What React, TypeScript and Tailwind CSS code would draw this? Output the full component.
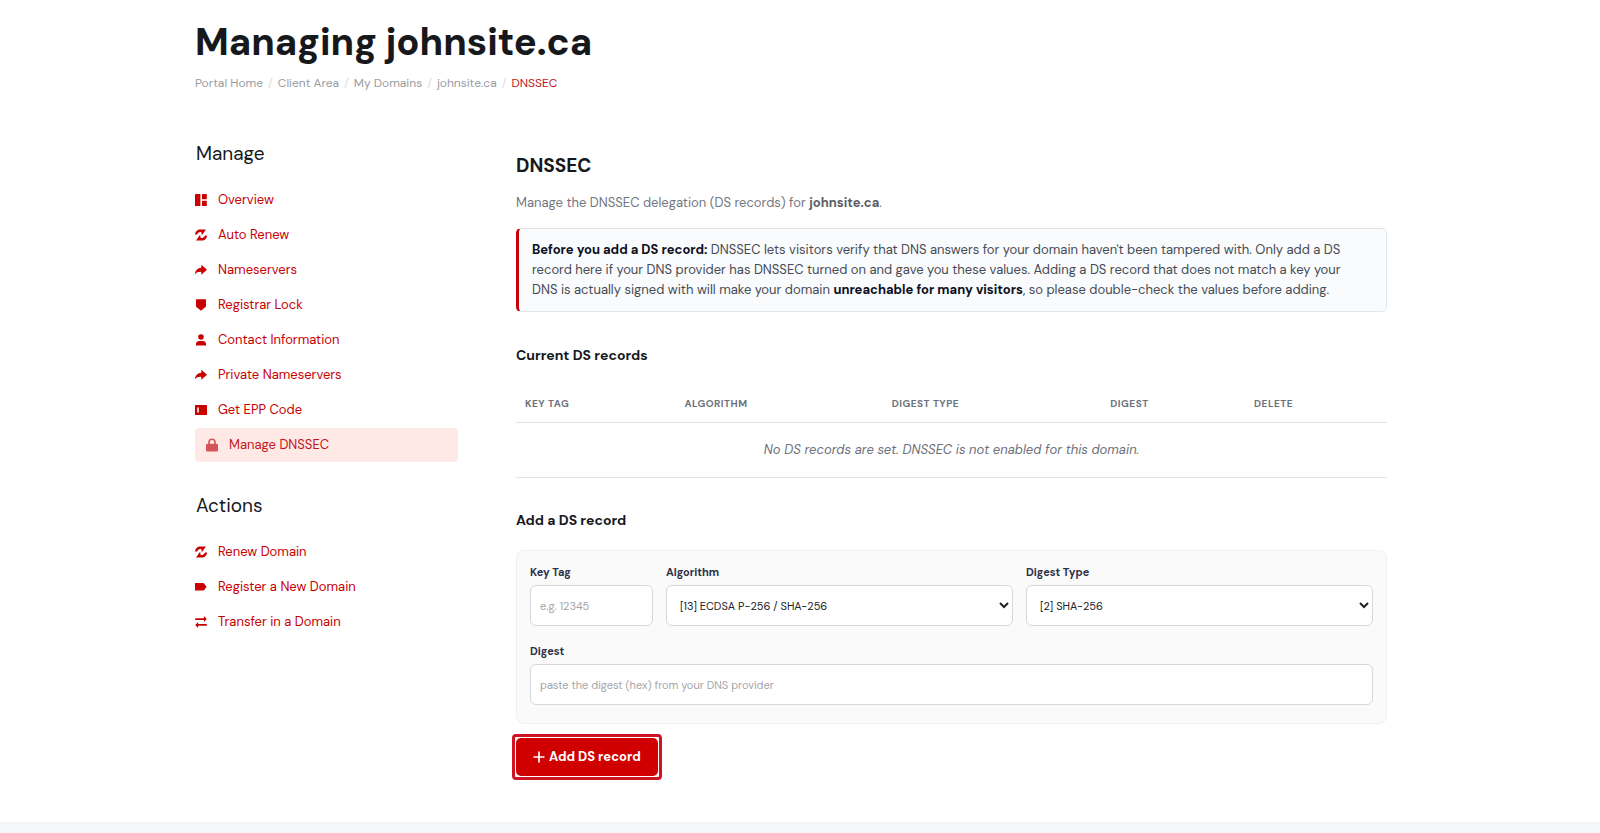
import type { ReactNode } from 'react';

type NavItem = { label: string; icon: ReactNode; active?: boolean };

const Icon = ({ children }: { children: ReactNode }) => (
  <svg viewBox="0 0 12 12" fill="currentColor" className="h-3 w-3 shrink-0" aria-hidden="true">
    {children}
  </svg>
);

const overviewIcon = (
  <Icon>
    <rect x="0" y="0" width="5.4" height="12" rx="0.5" />
    <rect x="7" y="0" width="4.8" height="5.2" rx="0.5" />
    <rect x="7" y="6.8" width="4.8" height="5.2" rx="0.5" />
  </Icon>
);

const renewIcon = (
  <Icon>
    <path d="M0 5.600C.2 2.400 2.500.4 5.300.4H11L6.900 6.200 6.300 3C4.200 2.600 2.600 4 2 5.600Z" />
    <path d="M12 6.400C11.800 9.600 9.500 11.600 6.700 11.600H1L5.100 5.800 5.700 9C7.800 9.400 9.400 8 10 6.400Z" />
  </Icon>
);

const shareIcon = (
  <Icon>
    <path d="M6.300.8 12 5.800 6.300 10.800V7.900C3.600 7.700 1.600 8.500 0 10.300 0 6.400 2.700 4 6.300 3.700Z" />
  </Icon>
);

const shieldIcon = (
  <Icon>
    <path d="M1.500.2h9q.5 0 .5.500v6.500q0 .5-.4.800L6 11.800 1.400 8q-.4-.3-.4-.8V.7q0-.5.5-.5Z" />
  </Icon>
);

const personIcon = (
  <Icon>
    <circle cx="6" cy="3" r="2.800" />
    <path d="M1 11.400V10C1 8.200 2.600 7.100 4.200 7.100h3.600C9.400 7.100 11 8.200 11 10v1.400Z" />
  </Icon>
);

const codeIcon = (
  <Icon>
    <path fillRule="evenodd" d="M.5.9h11q.5 0 .5.500v9.200q0 .5-.5.500H.5q-.5 0-.5-.5V1.400q0-.5.5-.5ZM2.200 3.600v4.800h1.600V3.600Z" />
  </Icon>
);

const tagIcon = (
  <Icon>
    <path d="M.5 2h7.800q.4 0 .7.400L11.600 5.800 9 9.200q-.3.400-.7.400H.5Q0 9.600 0 9.100V2.500Q0 2 .5 2Z" />
  </Icon>
);

const transferIcon = (
  <Icon>
    <path d="M.2 2.200H8.900V0L11.800 3 8.900 6V3.900H.2Z" />
    <path d="M11.800 8.100H3.100V6L.2 9l2.900 3V9.800H11.800Z" />
  </Icon>
);

const lockIcon = (
  <svg viewBox="0 0 12 14" className="h-3.5 w-3 shrink-0 opacity-70" aria-hidden="true">
    <path d="M3 6.500V4.200a3 3 0 0 1 6 0v2.300" fill="none" stroke="currentColor" strokeWidth="1.600" />
    <rect x="0" y="5.800" width="12" height="7.800" rx="1.500" fill="currentColor" />
  </svg>
);

const manageItems: NavItem[] = [
  { label: 'Overview', icon: overviewIcon },
  { label: 'Auto Renew', icon: renewIcon },
  { label: 'Nameservers', icon: shareIcon },
  { label: 'Registrar Lock', icon: shieldIcon },
  { label: 'Contact Information', icon: personIcon },
  { label: 'Private Nameservers', icon: shareIcon },
  { label: 'Get EPP Code', icon: codeIcon },
  { label: 'Manage DNSSEC', icon: lockIcon, active: true },
];

const actionItems: NavItem[] = [
  { label: 'Renew Domain', icon: renewIcon },
  { label: 'Register a New Domain', icon: tagIcon },
  { label: 'Transfer in a Domain', icon: transferIcon },
];

const crumbs = ['Portal Home', 'Client Area', 'My Domains', 'johnsite.ca'];

function NavSection({ title, items }: { title: string; items: NavItem[] }) {
  return (
    <nav aria-label={title}>
      <h2 className="mb-3.5 pl-px text-[19px] leading-[30px] text-[#16181c]">{title}</h2>
      <ul className="flex flex-col gap-px">
        {items.map(item => (
          <li key={item.label}>
            <a
              href="#"
              aria-current={item.active ? 'page' : undefined}
              className={
                item.active
                  ? 'flex h-[34px] items-center gap-[11px] rounded bg-[#ffe9e6] px-[11px] text-[#c4161c]'
                  : 'flex h-[34px] items-center gap-[11px] text-[#c80000]'
              }
            >
              {item.icon}
              {item.label}
            </a>
          </li>
        ))}
      </ul>
    </nav>
  );
}

export default function App() {
  return (
    <div className="bg-white pr-[18px] font-['DM_Sans',Inter,sans-serif] text-[13px] text-[#16181c]">
      <div className="mx-auto max-w-[1192px] pt-[17px] pb-[42px]">
        <h1 className="text-[38px] leading-[50px] font-extrabold">Managing johnsite.ca</h1>
        <nav aria-label="Breadcrumb" className="mt-1.5">
          <ol className="flex gap-[5px] text-xs leading-5 text-[#999ca1]">
            {crumbs.map(crumb => (
              <li key={crumb} className="flex gap-[5px]">
                <a href="#">{crumb}</a>
                <span className="text-[#d9dbde]">/</span>
              </li>
            ))}
            <li className="text-[#c4161c]" aria-current="page">DNSSEC</li>
          </ol>
        </nav>

        <div className="mt-[46px] grid grid-cols-[263px_minmax(0,1fr)] gap-x-[58px]">
          <aside className="flex flex-col gap-[29px]">
            <NavSection title="Manage" items={manageItems} />
            <NavSection title="Actions" items={actionItems} />
          </aside>

          <main className="pt-3">
            <h2 className="text-[19px] leading-[30px] font-bold">DNSSEC</h2>
            <p className="mt-3 leading-5 text-[#74777f]">
              Manage the DNSSEC delegation (DS records) for <strong className="text-[#5b5e66]">johnsite.ca</strong>.
            </p>

            <div className="mt-[15px] rounded-[5px] border border-l-3 border-[#e2e6ea] border-l-[#c4000a] bg-[#f9fbfd] py-[11px] pr-6 pl-[13px] leading-5 text-[#474b55]">
              <strong className="text-[#0c0f1c]">Before you add a DS record:</strong> DNSSEC lets visitors verify that
              DNS answers for your domain haven't been tampered with. Only add a DS record here if your DNS provider has
              DNSSEC turned on and gave you these values. Adding a DS record that does not match a key your DNS is
              actually signed with will make your domain{' '}
              <strong className="text-[#0c0f1c]">unreachable for many visitors</strong>, so please double-check the
              values before adding.
            </div>

            <h3 className="mt-[33px] text-sm leading-5 font-bold">Current DS records</h3>
            <table className="mt-[19px] w-full table-fixed border-collapse">
              <thead>
                <tr className="border-b border-[#e1e3e6] text-left text-[10px] leading-4 tracking-wider text-[#6d717b] uppercase">
                  <th className="w-[18.3%] px-[9px] pt-3 pb-2.5 font-bold">Key Tag</th>
                  <th className="w-[23.8%] px-[9px] pt-3 pb-2.5 font-bold">Algorithm</th>
                  <th className="w-[25.1%] px-[9px] pt-3 pb-2.5 font-bold">Digest Type</th>
                  <th className="w-[16.5%] px-[9px] pt-3 pb-2.5 font-bold">Digest</th>
                  <th className="px-[9px] pt-3 pb-2.5 font-bold">Delete</th>
                </tr>
              </thead>
              <tbody>
                <tr className="border-b border-[#e1e3e6]">
                  <td colSpan={5} className="py-[17px] text-center leading-5 text-[#6d717b] italic">
                    No DS records are set. DNSSEC is not enabled for this domain.
                  </td>
                </tr>
              </tbody>
            </table>

            <h3 className="mt-8 text-sm leading-5 font-bold">Add a DS record</h3>
            <form onSubmit={e => e.preventDefault()}>
              <div className="mt-5 grid grid-cols-[123px_1fr_1fr] gap-x-[13px] gap-y-[17px] rounded-lg border border-[#eef0f1] bg-[#fafafa] px-[13px] pt-[13px] pb-[18px] text-[11px] text-[#2d3148]">
                <div className="flex flex-col gap-1">
                  <label htmlFor="key-tag" className="leading-[17px] font-bold">Key Tag</label>
                  <input
                    id="key-tag"
                    type="text"
                    placeholder="e.g. 12345"
                    className="h-[41px] w-full rounded-md border border-[#d5d9db] bg-white px-[9px] placeholder:text-[#a3a5a9]"
                  />
                </div>
                <div className="flex flex-col gap-1">
                  <label htmlFor="algorithm" className="leading-[17px] font-bold">Algorithm</label>
                  <select
                    id="algorithm"
                    className="h-[41px] w-full rounded-md border border-[#d5d9db] bg-white px-[9px] text-[#202226]"
                  >
                    <option>[13] ECDSA P-256 / SHA-256</option>
                  </select>
                </div>
                <div className="flex flex-col gap-1">
                  <label htmlFor="digest-type" className="leading-[17px] font-bold">Digest Type</label>
                  <select
                    id="digest-type"
                    className="h-[41px] w-full rounded-md border border-[#d5d9db] bg-white px-[9px] text-[#202226]"
                  >
                    <option>[2] SHA-256</option>
                  </select>
                </div>
                <div className="col-span-3 flex flex-col gap-1">
                  <label htmlFor="digest" className="leading-[17px] font-bold">Digest</label>
                  <input
                    id="digest"
                    type="text"
                    placeholder="paste the digest (hex) from your DNS provider"
                    className="h-[41px] w-full rounded-md border border-[#d5d9db] bg-white px-[9px] placeholder:text-[#a3a5a9]"
                  />
                </div>
              </div>

              <div className="mt-2.5 -ml-1 w-fit rounded border-3 border-[#cf1322] p-px">
                <button
                  type="submit"
                  className="flex h-[38px] items-center gap-1 rounded-[5px] bg-[#d10000] px-[17px] text-[13px] font-bold text-white"
                >
                  <svg viewBox="0 0 12 12" className="h-3 w-3" fill="none" stroke="currentColor" strokeWidth="1.700" aria-hidden="true">
                    <path d="M6 .5v11M.5 6h11" />
                  </svg>
                  Add DS record
                </button>
              </div>
            </form>
          </main>
        </div>
      </div>
      <footer className="-mr-[18px] h-3 bg-[#f4f7f8]" />
    </div>
  );
}
